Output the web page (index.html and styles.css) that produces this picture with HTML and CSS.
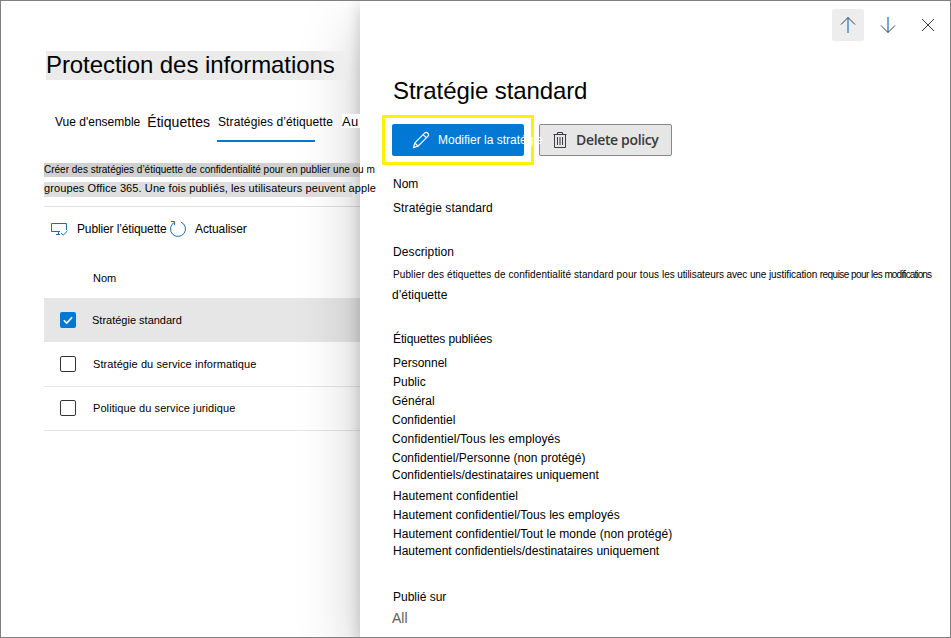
FILE: index.html
```html
<!DOCTYPE html>
<html lang="fr">
<head>
<meta charset="utf-8">
<title>Protection des informations</title>
<link rel="stylesheet" href="styles.css">
</head>
<body>
<div class="window">
  <main class="main">
    <h1 class="title">Protection des informations</h1>
    <nav class="tabs">
      <a class="tab">Vue d'ensemble</a>
      <a class="tab tab-large">Étiquettes</a>
      <a class="tab tab-active"><span>Stratégies d’étiquette</span></a>
      <a class="tab tab-cut">Au</a>
    </nav>
    <div class="intro">
      <p class="intro-first"><span>Créer des stratégies d’étiquette de confidentialité pour en publier une ou m</span></p>
      <p class="intro-second"><span>groupes Office 365. Une fois publiés, les utilisateurs peuvent apple</span></p>
    </div>
    <div class="toolbar">
      <svg class="icon-publish" viewBox="0 0 18 16" width="18" height="16"><path d="M9 10.5H.5V2.5H15.5V9M5 13.5H9M7.5 10.5V13.5M10 12L12.2 14.2L16.5 9.9" /></svg>
      <span class="publish">Publier l’étiquette</span>
      <svg class="icon-refresh" viewBox="0 0 18 18" width="18" height="18"><path d="M11.8 2A7.5 7.5 0 1 1 5.2 2.5M2 1.5H5.6V5.2" /></svg>
      <span class="refresh">Actualiser</span>
    </div>
    <div class="list">
      <div class="list-head">Nom</div>
      <div class="row row-selected"><span class="box box-checked"><svg viewBox="0 0 16 16" width="16" height="16"><path d="M3.8 8.2L6.7 11.1L12.2 5.3" /></svg></span><span>Stratégie standard</span></div>
      <div class="row"><span class="box"></span><span>Stratégie du service informatique</span></div>
      <div class="row"><span class="box"></span><span>Politique du service juridique</span></div>
    </div>
  </main>
  <aside class="panel">
    <div class="commands">
      <button class="command command-hover"><svg viewBox="0 0 18 18" width="18" height="18"><path class="stem" d="M9 1.5V17" /><path d="M2 8.5L9 1.5L16 8.5" /></svg></button>
      <button class="command"><svg viewBox="0 0 18 18" width="18" height="18"><path class="stem" d="M9 1V16.5" /><path d="M2 9.5L9 16.5L16 9.5" /></svg></button>
      <button class="command"><svg viewBox="0 0 18 18" width="18" height="18"><path d="M3 3L15 15M15 3L3 15" /></svg></button>
    </div>
    <h2 class="panel-title">Stratégie standard</h2>
    <div class="actions">
      <div class="highlight">
        <button class="edit"><svg viewBox="0 0 18 18" width="18" height="18"><path d="M1.5 16.5L2.8 12L12.6 2.2A2.2 2.2 0 0 1 15.8 5.4L6 15.2ZM11.2 3.6L14.4 6.8M2.8 12L6 15.2" /></svg><span>Modifier la stratégie</span></button>
      </div>
      <button class="delete"><svg viewBox="0 0 14 16" width="14" height="16"><path d="M.5 2.5H13.5M4.5 2.5V.5H9.5V2.5M1.5 2.5V15.5H12.5V2.5M4.5 5V13M7 5V13M9.5 5V13" /></svg><span>Delete policy</span></button>
    </div>
    <dl class="details">
      <dt>Nom</dt>
      <dd class="name">Stratégie standard</dd>
      <dt class="wide">Description</dt>
      <dd class="description"><span class="desc-a">Publier des étiquettes de confidentialité standard pour tous </span><span class="desc-b">les utilisateurs avec une justification </span><span class="desc-c">requise pour les </span><span class="desc-d">modifications</span></dd>
      <dd class="description-end">d’étiquette</dd>
      <dt class="tight">Étiquettes publiées</dt>
      <dd>
        <ul class="labels">
          <li>Personnel</li>
          <li>Public</li>
          <li class="out">Général</li>
          <li class="out">Confidentiel</li>
          <li class="out wide">Confidentiel/Tous les employés</li>
          <li class="out short">Confidentiel/Personne (non protégé)</li>
          <li class="out last">Confidentiels/destinataires uniquement</li>
          <li class="wide">Hautement confidentiel</li>
          <li class="spread">Hautement confidentiel/Tous les employés</li>
          <li class="short spread">Hautement confidentiel/Tout le monde (non protégé)</li>
          <li class="last">Hautement confidentiels/destinataires uniquement</li>
        </ul>
      </dd>
      <dt>Publié sur</dt>
      <dd class="location">All</dd>
    </dl>
  </aside>
</div>
</body>
</html>
```

FILE: styles.css
```css
* { box-sizing: border-box; margin: 0; padding: 0; }

body {
  font: 12px/20px "Liberation Sans", Arial, sans-serif;
  color: #000;
  background: #fff;
}

.window {
  display: flex;
  width: 951px;
  height: 638px;
  border: 1px solid #808080;
  overflow: hidden;
}

svg { display: block; flex: none; fill: none; stroke-width: 1; }
button { font: inherit; border: 0; background: none; white-space: nowrap; }

/* Policy list */
.main {
  width: 359px;
  flex: none;
  padding: 50px 0 0 43px;
  white-space: nowrap;
}

.title {
  width: 302px;
  height: 29px;
  margin-left: 2px;
  font-size: 24px;
  font-weight: 400;
  line-height: 28px;
  letter-spacing: -0.08px;
  background: linear-gradient(to right, #ebebeb 88%, transparent);
}

.tabs {
  display: flex;
  height: 29px;
  margin-top: 33px;
  padding-left: 11px;
  line-height: 18px;
}

.tab { height: 29px; }
.tab-large { margin-left: 7px; font-size: 14px; letter-spacing: 0.05px; }
.tab-active {
  width: 98px;
  margin-left: 7px;
  letter-spacing: 0.1px;
  border-bottom: 2px solid #0078d4;
}
.tab-active span { margin-left: 1px; }
.tab-cut {
  position: relative;
  z-index: 2;
  width: 18px;
  height: 14px;
  margin: 1px 0 0 27px;
  font-size: 13px;
  line-height: 15px;
  letter-spacing: 0.2px;
  background: #fff;
}

.intro {
  height: 44px;
  margin-top: 21px;
  border-bottom: 1px solid #e1e1e1;
}
.intro span { position: relative; z-index: 2; }
.intro-first {
  width: 316px;
  height: 14px;
  font-size: 10px;
  line-height: 13px;
  background: linear-gradient(to right, #d0d0d0 90%, #e6e6e6);
}
.intro-second {
  width: 308px;
  height: 15px;
  margin-top: 5px;
  font-size: 11px;
  line-height: 13px;
  letter-spacing: 0.1px;
  background: linear-gradient(to right, #dedede 88%, #f2f2f2);
}

.toolbar {
  display: flex;
  align-items: center;
  height: 44px;
  padding-left: 7px;
}
.toolbar svg { stroke: #1f6cb5; }
.publish { width: 92px; margin-left: 8px; letter-spacing: -0.13px; }
.refresh { margin-left: 8px; letter-spacing: -0.1px; }

.list { font-size: 11px; }
.list-head { height: 47px; padding: 17px 0 0 49px; }
.row {
  display: flex;
  align-items: center;
  height: 44px;
  padding-left: 16px;
  gap: 17px;
  letter-spacing: 0.08px;
  box-shadow: 0 1px #e6e6e6;
}
.row-selected { gap: 16px; letter-spacing: 0; background: #e6e6e6; box-shadow: none; }
.box {
  width: 16px;
  height: 16px;
  border: 1px solid #333;
  border-radius: 2px;
  background: #fff;
}
.box-checked { border: 0; background: #0078d4; }
.box-checked path { stroke: #fff; stroke-width: 1.5; }

/* Details panel */
.panel {
  position: relative;
  z-index: 1;
  flex: 1;
  padding-top: 8px;
  background: #fff;
  box-shadow: 0 25.6px 57.6px rgba(0, 0, 0, .22), 0 4.8px 14.4px rgba(0, 0, 0, .18);
}

.commands { display: flex; justify-content: flex-end; gap: 8px; padding-right: 6px; }
.command { display: grid; place-items: center; width: 32px; height: 32px; border-radius: 2px; }
.command-hover { background: #ededed; }
.command path { stroke: #3b3a45; }
.command .stem { stroke: #4c94cf; stroke-width: 1.6; }

.panel-title {
  height: 30px;
  margin: 35px 0 0 33px;
  font-size: 24px;
  font-weight: 400;
  line-height: 30px;
  letter-spacing: -0.1px;
}

.actions { display: flex; align-items: center; gap: 5px; margin: 9px 0 0 22px; }
.highlight {
  width: 152px;
  height: 50px;
  padding: 6px 7px;
  border: 3px solid #fff100;
}
.edit {
  position: relative;
  z-index: 1;
  display: flex;
  align-items: center;
  width: 132px;
  height: 32px;
  padding-left: 20px;
  gap: 8px;
  border-radius: 2px;
  color: #fff;
  background: #0078d4;
}
.edit path { stroke: #fff; stroke-width: 1.2; }
.delete {
  display: flex;
  align-items: center;
  width: 133px;
  height: 32px;
  padding-left: 13px;
  gap: 9px;
  border: 1px solid #8a8886;
  border-radius: 2px;
  font: 600 14px/20px "Open Sans", sans-serif;
  letter-spacing: -0.35px;
  color: #3b3a39;
  background: #e6e6e6;
}
.delete path { stroke: #3f3946; }

.details { padding: 9px 0 0 33px; white-space: nowrap; }
.name { margin: 4px 0 24px; letter-spacing: 0.1px; }
.wide { letter-spacing: 0.1px; }
.tight { letter-spacing: -0.12px; }
.description { height: 20px; margin-top: 3px; font-size: 10px; }
.desc-a { letter-spacing: 0.1px; }
.desc-b { letter-spacing: -0.1px; }
.desc-c { letter-spacing: -0.55px; }
.desc-d { letter-spacing: -0.9px; }
.description-end { margin: 0 0 24px -1px; }

.labels { margin-top: 4px; list-style: none; }
.labels li { height: 19px; }
.labels .out { margin-left: -1px; }
.labels .short { height: 17px; }
.labels .last { height: 21px; }
.labels .spread { letter-spacing: 0.05px; }
.labels li:last-child { height: 46px; }
.location { margin: 1px 0 0 -1px; font-size: 14px; color: #605e5c; }
```
